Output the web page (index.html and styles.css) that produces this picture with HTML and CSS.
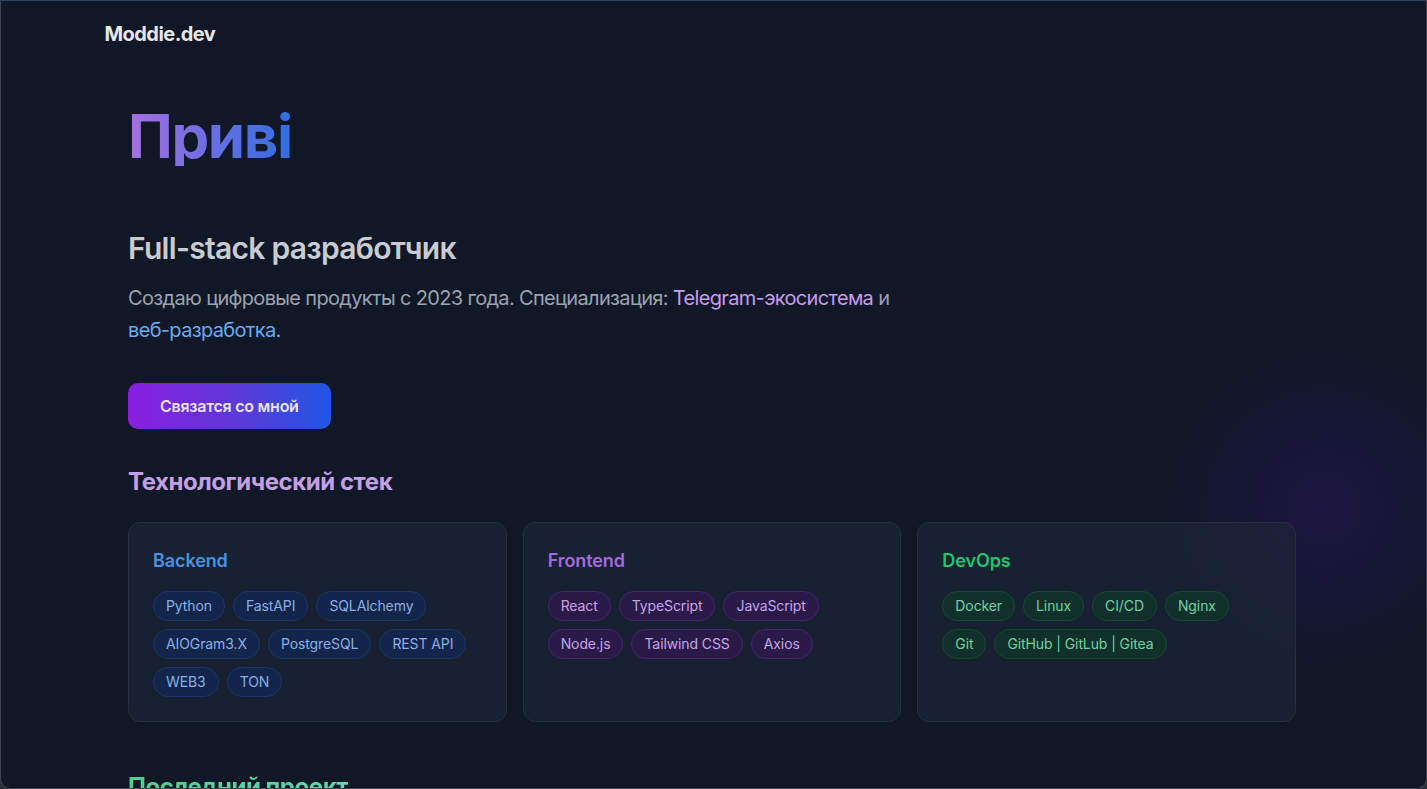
FILE: index.html
```html
<!DOCTYPE html>
<html lang="ru">
<head>
<meta charset="utf-8">
<title>Moddie.dev</title>
<link rel="stylesheet" href="styles.css">
</head>
<body>
<div class="frame">
  <div class="glow"></div>
  <header class="nav">
    <div class="nav-inner"><a class="logo" href="#">Moddie.dev</a></div>
  </header>
  <main class="main">
    <section class="hero">
      <h1 class="hello">Приві</h1>
      <h2 class="role">Full-stack разработчик</h2>
      <p class="lead">Создаю цифровые продукты с 2023 года. Специализация: <span class="hl-purple">Telegram-экосистема</span> и <span class="hl-blue">веб-разработка</span>.</p>
      <a class="btn" href="#">Связатся со мной</a>
    </section>
    <section class="stack">
      <h2 class="section-title purple">Технологический стек</h2>
      <div class="cards">
        <div class="card">
          <h3 class="card-title blue">Backend</h3>
          <div class="tags">
            <span class="tag tag-blue">Python</span>
            <span class="tag tag-blue">FastAPI</span>
            <span class="tag tag-blue">SQLAlchemy</span>
            <span class="tag tag-blue">AIOGram3.X</span>
            <span class="tag tag-blue">PostgreSQL</span>
            <span class="tag tag-blue">REST API</span>
            <span class="tag tag-blue">WEB3</span>
            <span class="tag tag-blue">TON</span>
          </div>
        </div>
        <div class="card">
          <h3 class="card-title violet">Frontend</h3>
          <div class="tags">
            <span class="tag tag-purple">React</span>
            <span class="tag tag-purple">TypeScript</span>
            <span class="tag tag-purple">JavaScript</span>
            <span class="tag tag-purple">Node.js</span>
            <span class="tag tag-purple">Tailwind CSS</span>
            <span class="tag tag-purple">Axios</span>
          </div>
        </div>
        <div class="card">
          <h3 class="card-title green">DevOps</h3>
          <div class="tags">
            <span class="tag tag-green">Docker</span>
            <span class="tag tag-green">Linux</span>
            <span class="tag tag-green">CI/CD</span>
            <span class="tag tag-green">Nginx</span>
            <span class="tag tag-green">Git</span>
            <span class="tag tag-green">GitHub | GitLub | Gitea</span>
          </div>
        </div>
      </div>
    </section>
    <section class="project">
      <h2 class="section-title green-grad">Последний проект</h2>
    </section>
  </main>
</div>
</body>
</html>
```

FILE: styles.css
```css
* { box-sizing: border-box; margin: 0; padding: 0; }
html, body { height: 100%; }
body {
  background: #2b2f36;
  font-family: Inter, "Noto Sans", sans-serif;
  overflow: hidden;
}
.frame {
  position: relative;
  height: 789px;
  background: #101727;
  border: 1px solid #3d4350;
  border-top-color: #2c4060;
  border-radius: 0 0 10px 10px;
  overflow: hidden;
}
.glow {
  position: absolute;
  left: 1163px;
  top: 347px;
  width: 320px;
  height: 320px;
  border-radius: 50%;
  background: radial-gradient(circle, rgba(36, 22, 78, 0.7) 0%, rgba(30, 22, 70, 0.4) 40%, rgba(20, 20, 50, 0) 70%);
  pointer-events: none;
}
a { text-decoration: none; }
.nav { height: 64px; display: flex; align-items: center; }
.nav-inner { width: 1216px; margin: 0 auto; }
.logo {
  display: inline-block;
  margin-left: -1px;
  color: #e5e7eb;
  font-size: 20px;
  font-weight: 700;
  letter-spacing: -0.55px;
  line-height: 28px;
  padding-top: 1px;
}
.main { position: relative; width: 1168px; margin-left: 127px; }
.hero { padding-top: 41px; }
.hello {
  font-size: 60px;
  line-height: 60px;
  font-weight: 700;
  letter-spacing: -1.4px;
  background: linear-gradient(90deg, #a86ee2 0%, #2f6fe2 164px);
  -webkit-background-clip: text;
  background-clip: text;
  color: transparent;
  display: inline-block;
}
.role {
  margin-top: 64px;
  font-size: 30px;
  line-height: 36px;
  font-weight: 600;
  color: #c8cbd2;
  letter-spacing: -0.7px;
}
.lead {
  margin-top: 16px;
  max-width: 772px;
  font-size: 20px;
  line-height: 32px;
  color: #9ca3af;
  letter-spacing: -0.66px;
}
.hl-purple { color: #c79cf0; }
.hl-blue { color: #6aaaf0; }
.btn {
  display: inline-block;
  margin-top: 37px;
  height: 46px;
  padding: 0 32px;
  line-height: 46px;
  font-size: 16px;
  font-weight: 600;
  letter-spacing: -0.25px;
  color: #e8e4f6;
  border-radius: 10px;
  background: linear-gradient(90deg, #8a1ee0 0%, #5b3ad8 55%, #1f56e4 100%);
}
.stack { margin-top: 37px; }
.section-title {
  font-size: 24px;
  line-height: 32px;
  font-weight: 700;
  letter-spacing: -0.45px;
}
.purple { color: #c3a0e6; }
.green-grad {
  display: inline-block;
  background: linear-gradient(90deg, #4fd08e, #5fd6b0);
  -webkit-background-clip: text;
  background-clip: text;
  color: transparent;
}
.cards {
  margin-top: 24px;
  display: grid;
  grid-template-columns: repeat(3, 1fr);
  gap: 16px;
}
.card {
  background: rgba(30, 40, 56, 0.6);
  border: 1px solid #262f3e;
  border-radius: 12px;
  padding: 24px;
}
.card-title {
  font-size: 18px;
  line-height: 28px;
  font-weight: 600;
  letter-spacing: -0.1px;
  margin-bottom: 16px;
}
.blue { color: #4791e6; }
.violet { color: #a469df; }
.green { color: #1ec46e; }
.tags { display: flex; flex-wrap: wrap; gap: 8px; }
.tag {
  display: inline-block;
  font-size: 14px;
  line-height: 20px;
  padding: 4px 12px;
  border-radius: 999px;
  border: 1px solid;
  letter-spacing: -0.1px;
}
.tag-blue { background: #13254a; border-color: #1d356c; color: #8ab0e8; }
.tag-purple { background: #2a1a48; border-color: #452570; color: #c9a2ea; }
.tag-green { background: #11302c; border-color: #154a30; color: #6fd3a0; }
.project { margin-top: 49px; }
```
